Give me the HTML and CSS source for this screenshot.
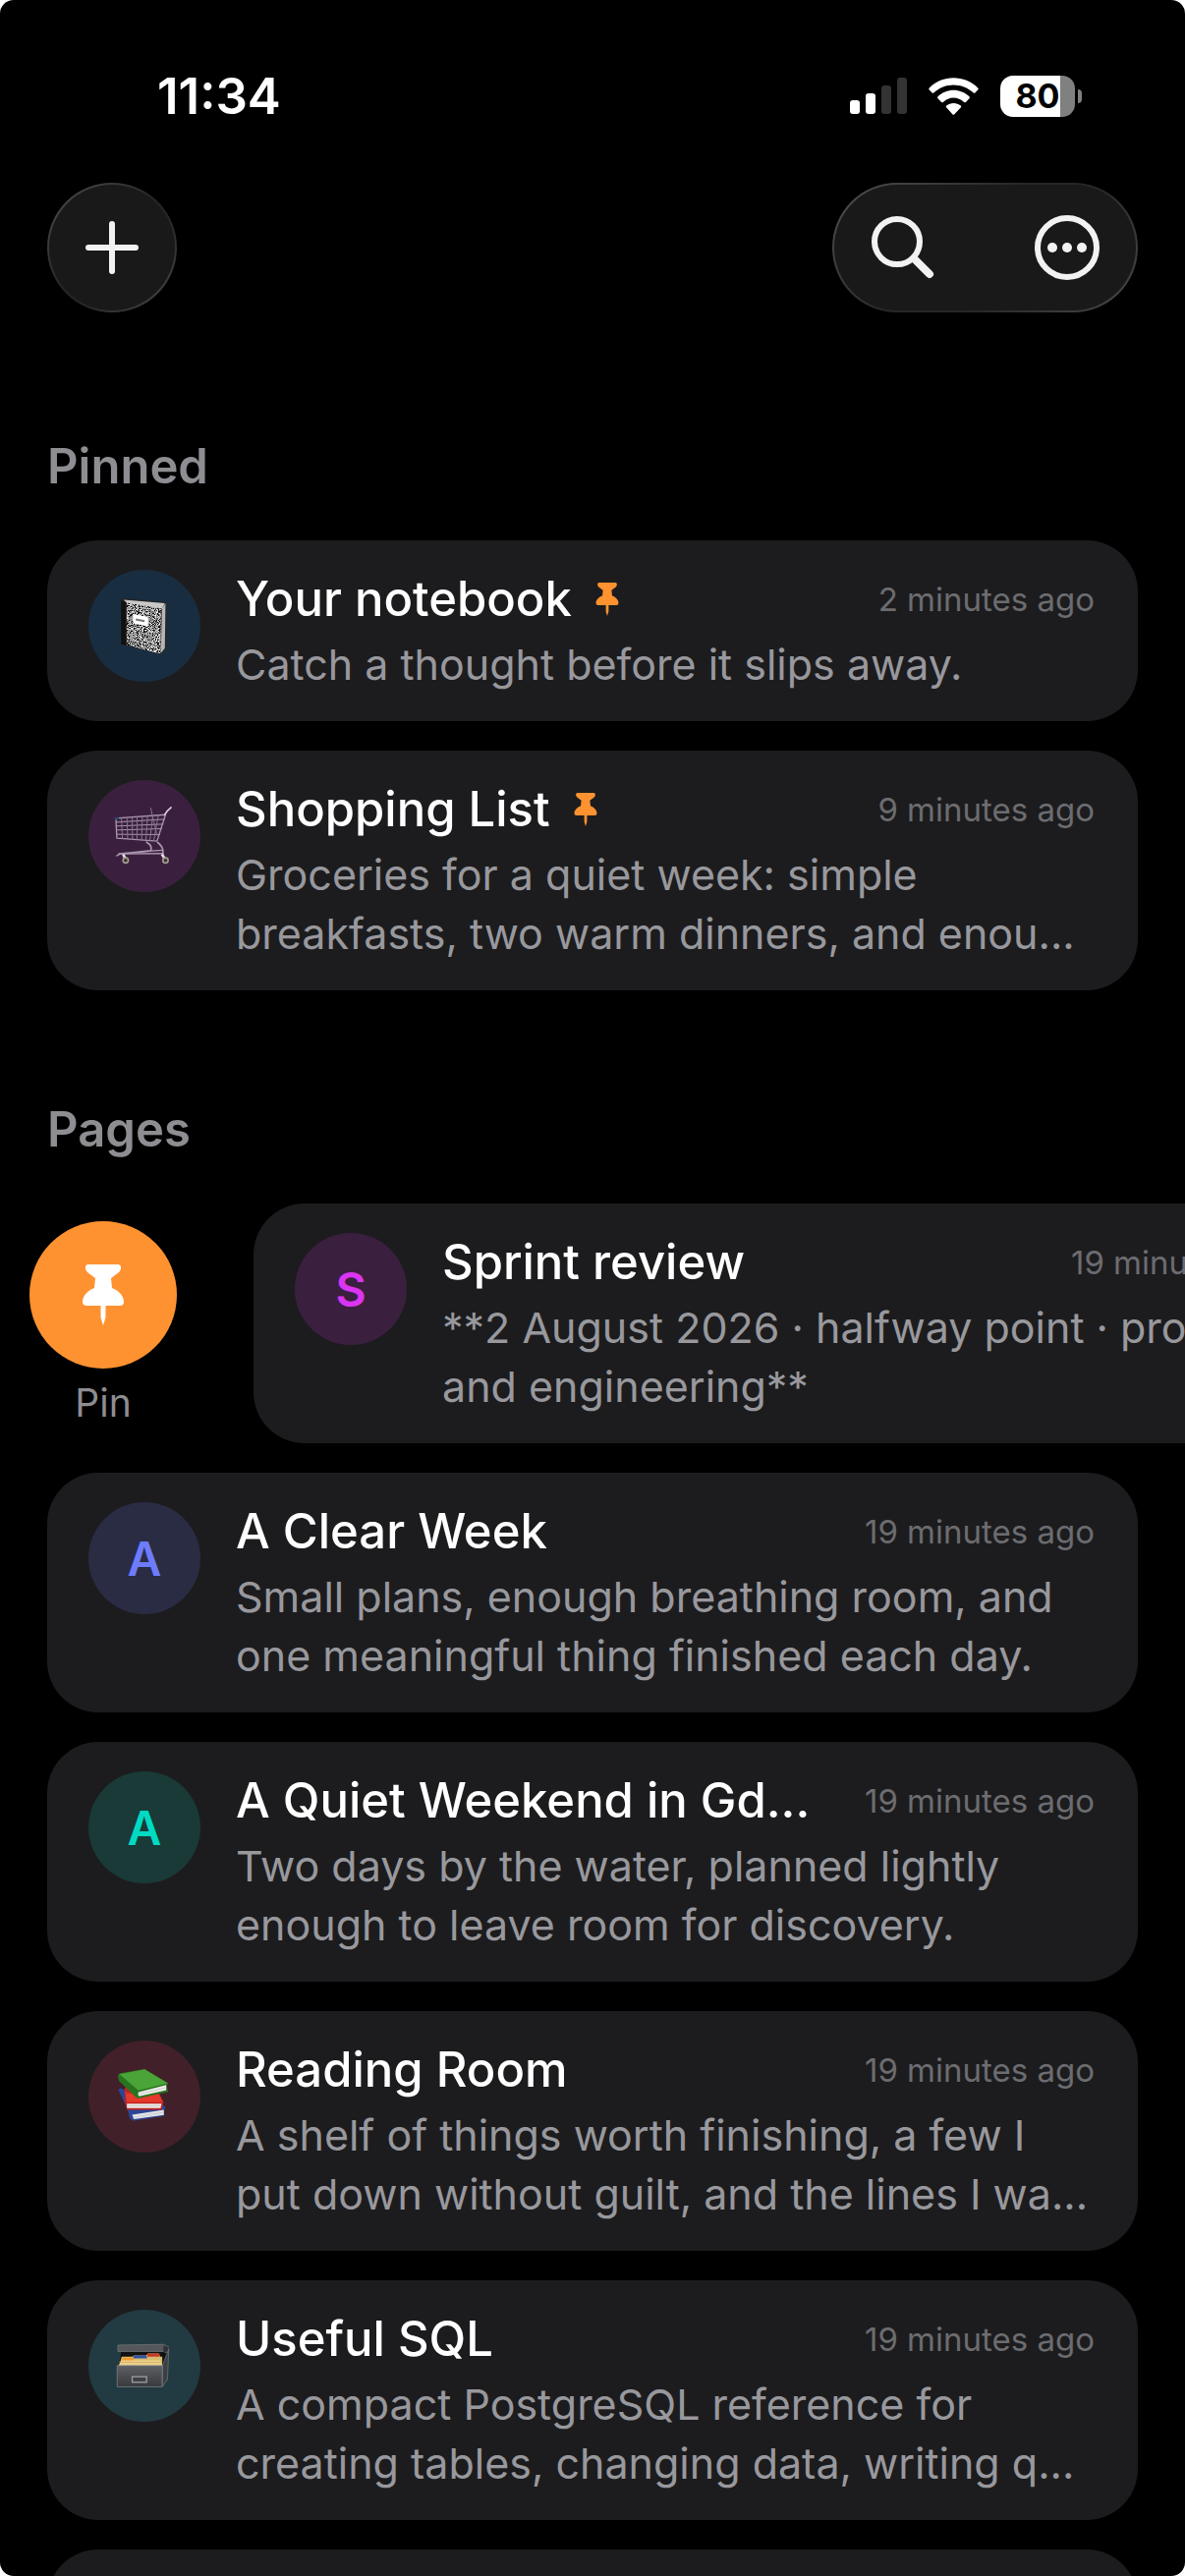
FILE: index.html
```
<!DOCTYPE html>
<html lang="en">
  <head>
    <meta charset="UTF-8" />
    <meta name="viewport" content="width=device-width, initial-scale=1.0" />
    <title>Notebook</title>
    <link rel="stylesheet" href="styles.css">
  </head>
  <body>
    <svg class="defs" aria-hidden="true">
      <symbol id="pin" viewBox="0 0 42 62">
        <path d="M6 0H36Q39 0 39 3V4Q39 6 37 8L29 14L30 24C38 27 42 33 42 38Q42 42 38 42H4Q0 42 0 38C0 33 4 27 12 24L13 14L5 8Q3 6 3 4V3Q3 0 6 0ZM18.5 42H23.5V54L21 62L18.5 54Z" />
      </symbol>
    </svg>
    <div class="screen">
      <div class="status">
        <span class="time">11:34</span>
        <div class="status-icons">
          <svg class="signal" viewBox="0 0 58 38" aria-hidden="true">
            <rect x="0" y="23" width="10" height="14" rx="3" fill="#fff" />
            <rect x="16" y="16" width="10" height="21" rx="3" fill="#fff" />
            <rect x="32" y="8" width="10" height="29" rx="3" fill="#333" />
            <rect x="48" y="0" width="10" height="37" rx="3" fill="#333" />
          </svg>
          <svg class="wifi" viewBox="436 116 151 113" aria-hidden="true">
            <g fill="#fff">
              <path d="M438 147C458 127 484 117 511 117S565 127 585 147Q588 150 585 153L577 161Q574 164 571 161C554 146 533 138 511 138S469 146 452 161Q449 164 446 161L438 153Q435 150 438 147Z" />
              <path d="M464 173C477 161 494 154 511 154S546 161 559 173Q562 176 559 179L550 189Q547 193 543 190C534 182 523 177 511 177S489 182 480 190Q476 193 473 189L464 179Q461 176 464 173Z" />
              <path d="M490 201C502 191 521 191 533 201Q536 204 533 207L514 227Q511 230 508 227L490 207Q487 204 490 201Z" />
            </g>
          </svg>
          <div class="battery">80</div>
        </div>
      </div>

      <header class="toolbar">
        <button class="glass add" aria-label="New page">
          <svg viewBox="0 0 54 54"><path d="M27 3V51M3 27H51" /></svg>
        </button>
        <div class="glass tools">
          <button aria-label="Search">
            <svg viewBox="0 0 66 66"><circle cx="27" cy="27" r="23" /><path d="M44 44L60 60" stroke-width="8" /></svg>
          </button>
          <button aria-label="More">
            <svg viewBox="0 0 66 66">
              <circle cx="33" cy="33" r="30" />
              <g class="dots"><circle cx="18" cy="33" r="5" /><circle cx="33" cy="33" r="5" /><circle cx="48" cy="33" r="5" /></g>
            </svg>
          </button>
        </div>
      </header>

      <main>
        <section>
          <h2>Pinned</h2>
          <div class="list">
            <a class="card" href="#notebook">
              <div class="avatar blue">
                <svg viewBox="60 59 343 343" aria-hidden="true">
                  <filter id="marble" x="0" y="0" width="1" height="1">
                    <feTurbulence type="fractalNoise" baseFrequency="0.35" numOctaves="2" seed="4" />
                    <feColorMatrix values="3 0 0 0 -1.2  3 0 0 0 -1.2  3 0 0 0 -1.2  0 0 0 0 1" />
                    <feComposite in2="SourceGraphic" operator="in" />
                  </filter>
                  <path d="M159 152L166 146L296 158L299 163V300L282 317L160 288Z" fill="#252525" />
                  <path d="M176 157L282 174L281 316L176 290Z" fill="#777" filter="url(#marble)" />
                  <path d="M168 151L294 161L285 178L176 160Z" fill="#c9c9c9" />
                  <path d="M285 177L296 162L294 299L282 314Z" fill="#b5b5b5" />
                  <path d="M160 152L176 158V291L160 287Z" fill="#111" />
                  <path d="M199 195L240 203Q243 204 243 208V226Q243 231 238 231L202 224Q196 223 196 217V199Q196 195 199 195Z" fill="#fff" />
                  <path d="M205 211L232 216" stroke="#777" stroke-width="6" />
                </svg>
              </div>
              <div class="text">
                <div class="row">
                  <h3>Your notebook</h3>
                  <svg class="pin"><use href="#pin" /></svg>
                  <time>2 minutes ago</time>
                </div>
                <p>Catch a thought before it slips away.</p>
              </div>
            </a>
            <a class="card" href="#shopping">
              <div class="avatar purple">
                <svg viewBox="60 71 343 343" aria-hidden="true">
                  <g fill="none" stroke="#a995ae" stroke-width="3" stroke-linecap="round" stroke-linejoin="round">
                    <path d="M144 188L296 177L270 258L147 249Z" stroke-width="4" />
                    <path d="M145 200L292 191M145 212L288 206M146 224L284 220M146 237L278 238" />
                    <path d="M161 187L164 250M178 186L180 251M194 185L195 252M209 184L209 253M225 183L223 254M241 182L236 255M257 181L248 257M274 179L260 257M251 157L256 181L270 240" stroke="#867490" />
                    <path d="M238 261Q258 272 250 288L153 297M272 262Q290 275 288 294" stroke-width="5" />
                    <path d="M146 303L158 297L290 296M220 290L288 286" stroke-width="4" />
                  </g>
                  <path d="M294 177Q300 165 313 155" fill="none" stroke="#ddd0df" stroke-width="5" stroke-linecap="round" />
                  <path d="M141 190L154 187" stroke="#284a78" stroke-width="7" />
                  <path d="M166 299L174 312M285 298L294 312" stroke="#e9dfe8" stroke-width="8" />
                  <circle cx="174" cy="317" r="8" fill="#393331" stroke="#a29a91" stroke-width="5" />
                  <circle cx="296" cy="317" r="8" fill="#393331" stroke="#a29a91" stroke-width="5" />
                </svg>
              </div>
              <div class="text">
                <div class="row">
                  <h3>Shopping List</h3>
                  <svg class="pin"><use href="#pin" /></svg>
                  <time>9 minutes ago</time>
                </div>
                <p>Groceries for a quiet week: simple breakfasts, two warm dinners, and enou...</p>
              </div>
            </a>
          </div>
        </section>

        <section>
          <h2>Pages</h2>
          <div class="list">
            <div class="swiped">
              <button class="pin-action">
                <span class="pin-circle"><svg><use href="#pin" /></svg></span>
                Pin
              </button>
              <a class="card" href="#sprint">
                <div class="avatar purple">S</div>
                <div class="text">
                  <div class="row">
                    <h3>Sprint review</h3>
                    <time>19 minutes ago</time>
                  </div>
                  <p>**2 August 2026 · halfway point · product and engineering**</p>
                </div>
              </a>
            </div>
            <a class="card" href="#week">
              <div class="avatar indigo">A</div>
              <div class="text">
                <div class="row">
                  <h3>A Clear Week</h3>
                  <time>19 minutes ago</time>
                </div>
                <p>Small plans, enough breathing room, and one meaningful thing finished each day.</p>
              </div>
            </a>
            <a class="card" href="#weekend">
              <div class="avatar teal">A</div>
              <div class="text">
                <div class="row">
                  <h3>A Quiet Weekend in Gd...</h3>
                  <time>19 minutes ago</time>
                </div>
                <p>Two days by the water, planned lightly enough to leave room for discovery.</p>
              </div>
            </a>
            <a class="card" href="#reading">
              <div class="avatar red">
                <svg viewBox="60 51 343 343" aria-hidden="true">
                  <path d="M151 201L158 197L280 240L297 256L291 264L292 282L195 297L186 288L180 262Z" fill="#2c4595" />
                  <path d="M194 278L291 263V279L199 292Z" fill="#e1e3e8" />
                  <path d="M171 193L275 210L290 240L284 263L178 263L172 238Z" fill="#c2231d" />
                  <path d="M180 212L276 216L288 240H178L172 206Z" fill="#e33a2c" />
                  <path d="M178 244H284L281 258H178Z" fill="#ecebea" />
                  <path d="M151 156L157 151L232 138L305 182L300 188L304 208L214 228Q206 228 201 220L154 175Q149 167 151 156Z" fill="#28751f" />
                  <path d="M155 154L232 139L303 182L213 204Z" fill="#4aa437" />
                  <path d="M213 209L298 187V203L215 222Q210 216 213 209Z" fill="#eeeeec" />
                  <path d="M215 215L297 195M179 251H282M198 286L290 271" stroke="#bbb" stroke-width="2" />
                </svg>
              </div>
              <div class="text">
                <div class="row">
                  <h3>Reading Room</h3>
                  <time>19 minutes ago</time>
                </div>
                <p>A shelf of things worth finishing, a few I put down without guilt, and the lines I wa...</p>
              </div>
            </a>
            <a class="card" href="#sql">
              <div class="avatar cyan">
                <svg viewBox="60 62 343 343" aria-hidden="true">
                  <linearGradient id="steel" x2="0" y2="1">
                    <stop stop-color="#5d6064" /><stop offset="1" stop-color="#37393c" />
                  </linearGradient>
                  <path d="M160 190H302V230H155Z" fill="#111" />
                  <path d="M150 170L290 168L307 177L301 194L289 190H150Z" fill="#54575b" stroke="#777b80" stroke-width="2" />
                  <path d="M289 190L291 170L307 178L303 194Z" fill="#303235" />
                  <path d="M162 206H195L199 202H237L242 196H276L280 206H286V234H154Z" fill="#d8bd72" />
                  <path d="M199 202H237L240 211H196Z" fill="#3152a5" />
                  <path d="M242 196H276L279 206H239Z" fill="#c83a28" />
                  <path d="M160 217L166 208H196L200 217H279L286 234H152Z" fill="#efd28b" />
                  <path d="M161 217L166 208H196L200 217Z" fill="#ef982c" />
                  <path d="M154 223H282" stroke="#c7a35d" stroke-width="2" />
                  <path d="M287 232L306 182L302 276L286 298Z" fill="#3c3f43" stroke="#777b80" stroke-width="2" />
                  <path d="M148 233H287L285 298H148Z" fill="url(#steel)" stroke="#888b8e" stroke-width="2" />
                  <rect x="194" y="267" width="44" height="17" fill="#3d4044" stroke="#9b9ea1" stroke-width="4" />
                </svg>
              </div>
              <div class="text">
                <div class="row">
                  <h3>Useful SQL</h3>
                  <time>19 minutes ago</time>
                </div>
                <p>A compact PostgreSQL reference for creating tables, changing data, writing q...</p>
              </div>
            </a>
            <div class="card next"></div>
          </div>
        </section>
      </main>
    </div>
  </body>
</html>
```
FILE: styles.css
```
* {
  box-sizing: border-box;
}
html {
  background: white;
}
body {
  margin: 0;
  font-family: Inter, "Liberation Sans", sans-serif;
}
h2,
h3,
p {
  margin: 0;
}
button {
  padding: 0;
  border: none;
  background: none;
  color: inherit;
  font-family: inherit;
}
svg {
  display: block;
}
.defs {
  display: none;
}
.screen {
  height: 100vh;
  overflow: hidden;
  border-radius: 14px;
  background: black;
  color: white;
}
.status {
  display: flex;
  justify-content: space-between;
  align-items: center;
  padding: 68px 112px 0 160px;
}
.time {
  font-size: 51px;
  font-weight: 600;
  line-height: 60px;
}
.status-icons {
  display: flex;
  align-items: center;
  gap: 22px;
}
.signal {
  width: 58px;
  height: 38px;
}
.wifi {
  width: 51px;
  height: 38px;
}
.battery {
  position: relative;
  width: 76px;
  height: 42px;
  border-radius: 13px;
  background: linear-gradient(to right, white 80%, #808080 80%);
  color: black;
  font-size: 34px;
  font-weight: 700;
  line-height: 42px;
  text-align: center;
}
.battery::after {
  content: "";
  position: absolute;
  top: 14px;
  right: -7px;
  width: 4px;
  height: 14px;
  border-radius: 0 4px 4px 0;
  background: #808080;
}
.toolbar {
  display: flex;
  justify-content: space-between;
  padding: 58px 48px 0;
}
.glass {
  display: flex;
  align-items: center;
  height: 132px;
  border: 2px solid transparent;
  border-radius: 66px;
  background:
    linear-gradient(#191919, #191919) padding-box,
    linear-gradient(135deg, #505050, #262626 45%, #262626 60%, #4a4a4a) border-box;
}
.glass svg {
  width: 66px;
  height: 66px;
  fill: none;
  stroke: #f2f2f2;
  stroke-width: 6;
  stroke-linecap: round;
}
.glass .dots {
  fill: #f2f2f2;
  stroke: none;
}
.add {
  justify-content: center;
  width: 132px;
}
.add svg {
  width: 54px;
  height: 54px;
}
.tools {
  gap: 101px;
  padding: 0 37px;
}
section {
  padding: 112px 48px 0;
}
section:first-child {
  padding-top: 127px;
}
h2 {
  margin-bottom: 45px;
  color: #8d8d92;
  font-size: 49px;
  font-weight: 600;
  line-height: 60px;
}
.list {
  display: flex;
  flex-direction: column;
  gap: 30px;
}
.card {
  display: flex;
  gap: 36px;
  padding: 30px 44px 28px 42px;
  border-radius: 52px;
  background: #1c1c1e;
  color: white;
  text-decoration: none;
}
.next {
  min-height: 244px;
}
.avatar {
  display: flex;
  flex: none;
  justify-content: center;
  align-items: center;
  width: 114px;
  height: 114px;
  border-radius: 50%;
  font-size: 48px;
  font-weight: 600;
}
.avatar svg {
  width: 100%;
  height: 100%;
}
.blue {
  background: #192d41;
}
.purple {
  background: #3a203e;
  color: #db34f2;
}
.indigo {
  background: #2a2c44;
  color: #6d7cff;
}
.teal {
  background: #193a37;
  color: #00dac3;
}
.red {
  background: #41202a;
}
.cyan {
  background: #223a42;
}
.text {
  flex: 1;
  min-width: 0;
}
.row {
  display: flex;
  align-items: center;
  margin-bottom: 6px;
}
h3 {
  font-size: 49px;
  font-weight: 500;
  line-height: 60px;
  white-space: nowrap;
}
.pin {
  width: 24px;
  height: 34px;
  margin-left: 24px;
  fill: #ff9230;
}
time {
  margin-left: auto;
  color: #6c6c70;
  font-size: 33px;
  white-space: nowrap;
}
p {
  color: #98989d;
  font-size: 43px;
  line-height: 60px;
}
.swiped {
  display: flex;
  align-items: flex-start;
  gap: 78px;
  margin: 0 -48px 0 -18px;
  overflow: hidden;
}
.swiped .card {
  flex: 0 0 calc(100% - 66px);
}
.pin-action {
  display: flex;
  flex: none;
  flex-direction: column;
  align-items: center;
  gap: 10px;
  padding-top: 18px;
  color: #8d8d92;
  font-size: 39px;
  line-height: 50px;
}
.pin-circle {
  display: flex;
  justify-content: center;
  align-items: center;
  width: 150px;
  height: 150px;
  border-radius: 50%;
  background: #ff9230;
}
.pin-circle svg {
  width: 42px;
  height: 62px;
  fill: white;
}
```
